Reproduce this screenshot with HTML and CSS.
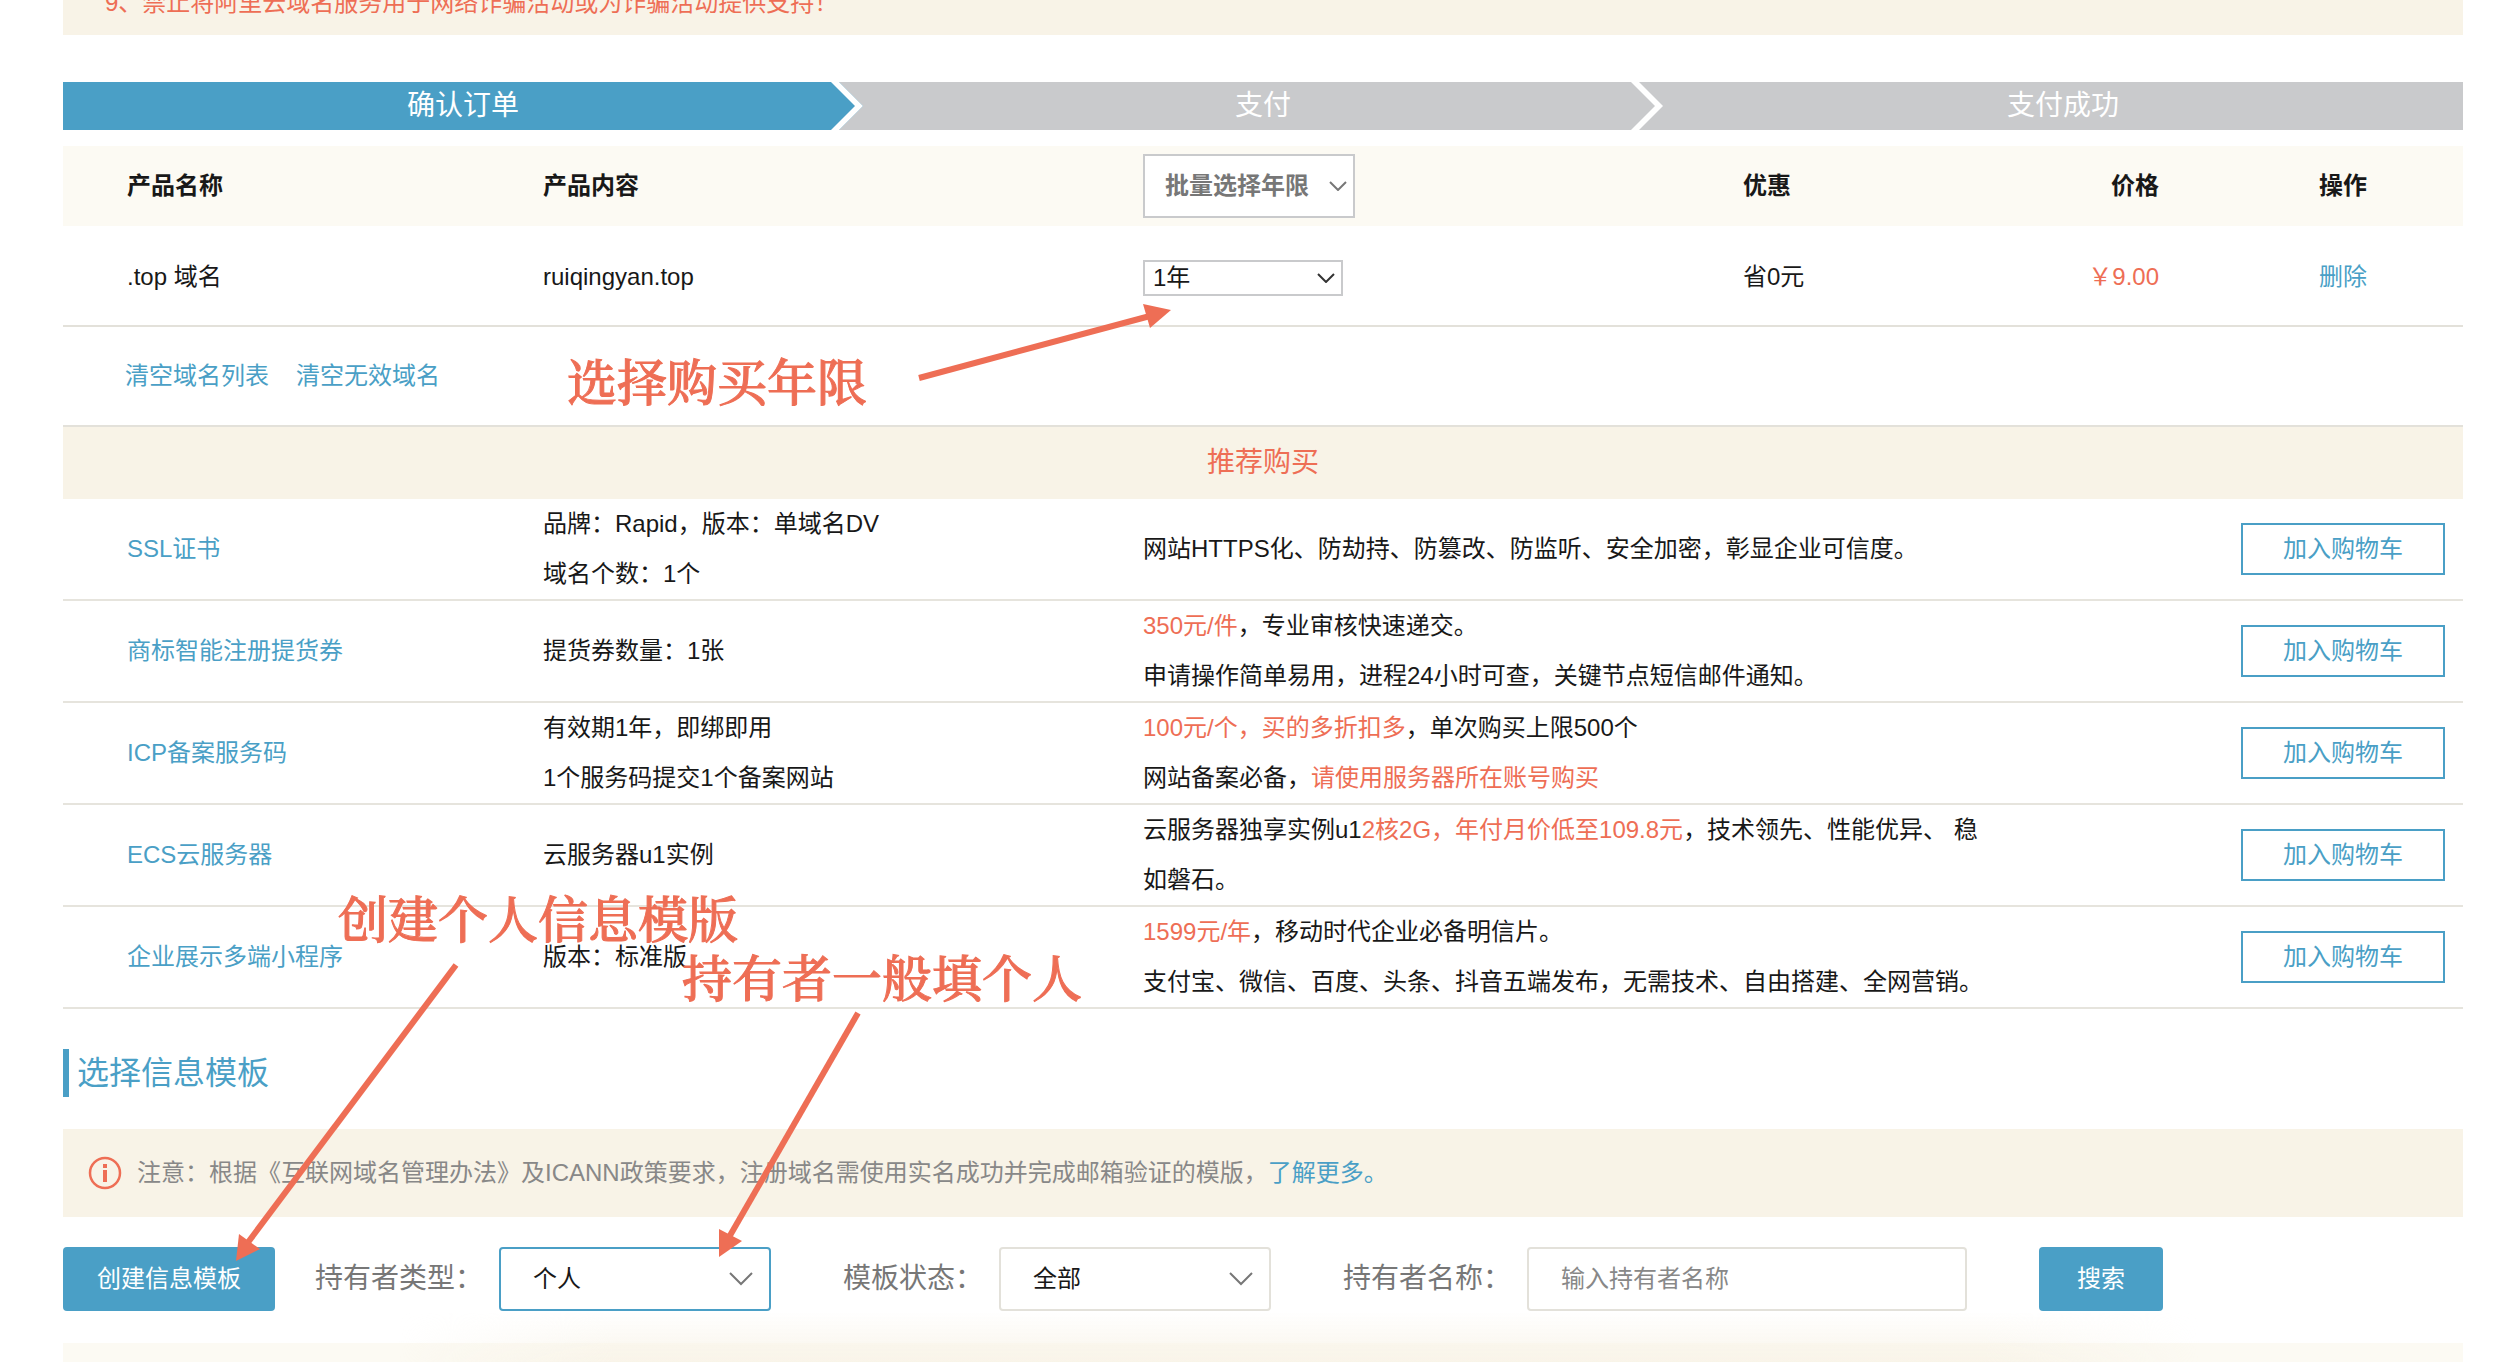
FILE: index.html
```html
<!DOCTYPE html>
<html lang="zh-CN">
<head>
<meta charset="utf-8">
<title>确认订单</title>
<link rel="stylesheet" href="styles.css">
</head>
<body>
<main class="page">
  <p class="rules">9、禁止将阿里云域名服务用于网络诈骗活动或为诈骗活动提供支持！</p>

  <ol class="steps">
    <li class="step step-current">确认订单
      <svg class="step-arrow" viewBox="0 0 32 48" aria-hidden="true"><path fill="#c9cacc" d="M8 0H32V48H8L32 24Z"/><path fill="#fff" d="M0 0H8L32 24L8 48H0L24 24Z"/></svg>
    </li>
    <li class="step">支付
      <svg class="step-arrow" viewBox="0 0 32 48" aria-hidden="true"><path fill="#fff" d="M0 0H8L32 24L8 48H0L24 24Z"/></svg>
    </li>
    <li class="step">支付成功</li>
  </ol>

  <table class="order">
    <colgroup><col class="w20"><col class="w25"><col class="w25"><col class="w10"><col class="w10"><col class="w10"></colgroup>
    <thead>
      <tr>
        <th>产品名称</th>
        <th>产品内容</th>
        <th>
          <span class="select select-batch">
            <select aria-label="批量选择年限"><option>批量选择年限</option></select>
            <svg viewBox="0 0 18 10" width="18" height="10" aria-hidden="true"><path d="M1 1L9 9L17 1"/></svg>
          </span>
        </th>
        <th>优惠</th>
        <th class="price">价格</th>
        <th class="action">操作</th>
      </tr>
    </thead>
    <tbody>
      <tr>
        <td>.top 域名</td>
        <td>ruiqingyan.top</td>
        <td>
          <span class="select select-year">
            <select aria-label="年限"><option>1年</option></select>
            <svg viewBox="0 0 18 10" width="18" height="10" aria-hidden="true"><path d="M1 1L9 9L17 1"/></svg>
          </span>
        </td>
        <td>省0元</td>
        <td class="price hot">￥9.00</td>
        <td class="action"><a href="#">删除</a></td>
      </tr>
    </tbody>
  </table>

  <div class="clear-links">
    <a href="#">清空域名列表</a>
    <a href="#">清空无效域名</a>
  </div>

  <h2 class="recommend-title">推荐购买</h2>
  <table class="recommend">
    <colgroup><col class="w20"><col class="w25"><col class="w35"><col class="w20"></colgroup>
    <tbody>
      <tr>
        <td><a href="#">SSL证书</a></td>
        <td>品牌：Rapid，版本：单域名DV<br>域名个数：1个</td>
        <td>网站HTTPS化、防劫持、防篡改、防监听、安全加密，彰显企业可信度。</td>
        <td class="cart"><button class="btn-outline" type="button">加入购物车</button></td>
      </tr>
      <tr>
        <td><a href="#">商标智能注册提货券</a></td>
        <td>提货券数量：1张</td>
        <td><span class="hot">350元/件</span>，专业审核快速递交。<br>申请操作简单易用，进程24小时可查，关键节点短信邮件通知。</td>
        <td class="cart"><button class="btn-outline" type="button">加入购物车</button></td>
      </tr>
      <tr>
        <td><a href="#">ICP备案服务码</a></td>
        <td>有效期1年，即绑即用<br>1个服务码提交1个备案网站</td>
        <td><span class="hot">100元/个，买的多折扣多</span>，单次购买上限500个<br>网站备案必备，<span class="hot">请使用服务器所在账号购买</span></td>
        <td class="cart"><button class="btn-outline" type="button">加入购物车</button></td>
      </tr>
      <tr>
        <td><a href="#">ECS云服务器</a></td>
        <td>云服务器u1实例</td>
        <td>云服务器独享实例u1<span class="hot">2核2G，年付月价低至109.8元</span>，技术领先、性能优异、 稳如磐石。</td>
        <td class="cart"><button class="btn-outline" type="button">加入购物车</button></td>
      </tr>
      <tr>
        <td><a href="#">企业展示多端小程序</a></td>
        <td>版本：标准版</td>
        <td><span class="hot">1599元/年</span>，移动时代企业必备明信片。<br>支付宝、微信、百度、头条、抖音五端发布，无需技术、自由搭建、全网营销。</td>
        <td class="cart"><button class="btn-outline" type="button">加入购物车</button></td>
      </tr>
    </tbody>
  </table>

  <h2 class="section-title">选择信息模板</h2>

  <div class="notice">
    <svg viewBox="0 0 34 34" width="34" height="34" aria-hidden="true"><circle cx="17" cy="17" r="15" fill="none" stroke="#ee6e55" stroke-width="2.5"/><path d="M15 8H19V12H15ZM15 14H19V26H15Z" fill="#ee6e55"/></svg>
    <p>注意：根据《互联网域名管理办法》及ICANN政策要求，注册域名需使用实名成功并完成邮箱验证的模版，<a href="#">了解更多。</a></p>
  </div>

  <form class="filters">
    <button class="btn" type="button">创建信息模板</button>
    <div class="field">
      <label for="owner-type">持有者类型：</label>
      <span class="select select-filter select-active">
        <select id="owner-type"><option>个人</option></select>
        <svg viewBox="0 0 24 14" width="24" height="14" aria-hidden="true"><path d="M1 1L12 12L23 1"/></svg>
      </span>
    </div>
    <div class="field">
      <label for="tpl-state">模板状态：</label>
      <span class="select select-filter">
        <select id="tpl-state"><option>全部</option></select>
        <svg viewBox="0 0 24 14" width="24" height="14" aria-hidden="true"><path d="M1 1L12 12L23 1"/></svg>
      </span>
    </div>
    <div class="field">
      <label for="owner-name">持有者名称：</label>
      <input id="owner-name" type="text" placeholder="输入持有者名称">
    </div>
    <button class="btn" type="submit">搜索</button>
  </form>

  <div class="result-head"></div>
</main>

<svg class="arrows" width="1200" height="1300" viewBox="0 0 1200 1300" aria-hidden="true">
  <g stroke="#ee6e55" stroke-width="6"><path d="M919 378L1150 316"/><path d="M456 965L246 1245"/><path d="M858 1013L728 1239"/></g>
  <g fill="#ee6e55"><path d="M1143 304L1171 310L1150 328Z"/><path d="M239 1234L260 1249L236 1261Z"/><path d="M719 1229L742 1241L719 1257Z"/></g>
</svg>
<p class="note note-year">选择购买年限</p>
<p class="note note-create">创建个人信息模版</p>
<p class="note note-owner">持有者一般填个人</p>
</body>
</html>
```
FILE: styles.css
```css
* { box-sizing: border-box; }

body {
  margin: 0;
  position: relative;
  background: #fff;
  color: #181818;
  font: 24px/50px "Liberation Sans", "Noto Sans CJK SC", sans-serif;
}

a { color: #4a9fc6; text-decoration: none; }
p, h2, ol { margin: 0; padding: 0; font-weight: 400; }
button, input, select { font: inherit; margin: 0; }
.hot { color: #ee6e55; }

.page { padding: 0 41px 0 63px; overflow: hidden; }

/* the last rule of the agreement, scrolled up under the top edge */
.rules {
  margin-top: -22px;
  padding: 0 42px 7px;
  background: #f8f3e7;
  color: #ee6e55;
}

.steps {
  display: flex;
  margin: 47px 0 16px;
  list-style: none;
  color: #fff;
  font-size: 28px;
  line-height: 48px;
  text-align: center;
}
.step { position: relative; flex: 1; background: #c9cacc; }
.step-current { background: #4a9fc6; }
.step-arrow { position: absolute; top: 0; right: 0; width: 32px; height: 48px; }

table { width: 100%; table-layout: fixed; border-collapse: separate; border-spacing: 0; }
th, td { padding: 0; text-align: left; vertical-align: middle; }
th:first-child, td:first-child { padding-left: 64px; }
.w10 { width: 10%; }
.w20 { width: 20%; }
.w25 { width: 25%; }
.w35 { width: 35%; }

.order th { height: 80px; background: #fcfaf3; }
.order td { height: 101px; padding-top: 2px; border-bottom: 2px solid #e3e1da; }
.order .price { padding-right: 64px; text-align: right; }
.order .action { padding-left: 96px; }

.select { display: inline-grid; align-items: center; vertical-align: middle; }
.select select {
  grid-area: 1 / 1;
  width: 100%;
  height: 100%;
  appearance: none;
  border: 2px solid #c9cacc;
  border-radius: 0;
  background: #fff;
  color: #181818;
}
.select svg {
  grid-area: 1 / 1;
  justify-self: end;
  margin-right: 8px;
  fill: none;
  stroke: #333;
  stroke-width: 2;
  pointer-events: none;
}
.select-batch { width: 212px; height: 64px; }
.select-batch select { padding: 0 20px; color: #777; }
.select-batch svg { stroke: #777; }
.select-year { width: 200px; height: 36px; }
.select-year select { padding: 0 8px; line-height: 32px; }

.clear-links {
  display: flex;
  gap: 27px;
  padding: 24px 62px;
  border-bottom: 2px solid #e3e1da;
}

.recommend-title {
  background: #f8f3e7;
  color: #ee6e55;
  font-size: 28px;
  line-height: 72px;
  text-align: center;
}
.recommend td { height: 102px; border-bottom: 2px solid #e6e4dd; }
.recommend .cart { padding-right: 18px; text-align: right; }

.btn-outline {
  width: 204px;
  height: 52px;
  padding: 0;
  border: 2px solid #4a9fc6;
  background: #fff;
  color: #4a9fc6;
  line-height: 48px;
  vertical-align: middle;
}

.section-title {
  margin: 40px 0 32px;
  padding-left: 8px;
  border-left: 6px solid #4a9fc6;
  color: #4a9fc6;
  font-size: 32px;
  line-height: 48px;
}

.notice {
  display: flex;
  align-items: center;
  gap: 15px;
  height: 88px;
  padding: 0 25px;
  background: #f8f3e7;
  color: #888;
}

.filters { display: flex; align-items: center; margin: 30px 0 32px; }
.btn {
  height: 64px;
  padding: 0 34px;
  border: 0;
  border-radius: 4px;
  background: #4a9fc6;
  color: #fff;
}
.filters .btn:last-child { padding: 0 38px; }
.field { display: flex; align-items: center; gap: 16px; margin-right: 72px; }
.btn + .field { margin-left: 40px; }
.field label { color: #777; font-size: 28px; }
.select-filter { width: 272px; height: 64px; }
.select-filter select { padding: 0 32px; border-color: #e3e1da; border-radius: 4px; }
.select-active select { border-color: #4a9fc6; }
.select-filter svg { margin-right: 18px; stroke: #777; }
.field input {
  width: 440px;
  height: 64px;
  padding: 0 32px;
  border: 2px solid #e3e1da;
  border-radius: 4px;
}
.field input::placeholder { color: #888; opacity: 1; }

.result-head {
  position: relative;
  height: 19px;
  background: #fcfaf3;
}
.result-head::before {
  content: "";
  position: absolute;
  inset: -32px 11% 0 14%;
  background: linear-gradient(rgba(248, 243, 231, 0), #f8f3e7 60px);
  mask-image: linear-gradient(90deg, transparent, #000 12%, #000 88%, transparent);
}

/* hand-drawn notes over the page */
.arrows { position: absolute; top: 0; left: 0; }
.note {
  position: absolute;
  color: #ee6e55;
  font: 500 50px/60px "Songti SC", "Noto Serif CJK SC", "Noto Sans CJK SC", serif;
  -webkit-text-stroke: 1px #ee6e55;
  white-space: nowrap;
}
.note-year { left: 567px; top: 349px; }
.note-create { left: 338px; top: 886px; }
.note-owner { left: 682px; top: 945px; }
```
